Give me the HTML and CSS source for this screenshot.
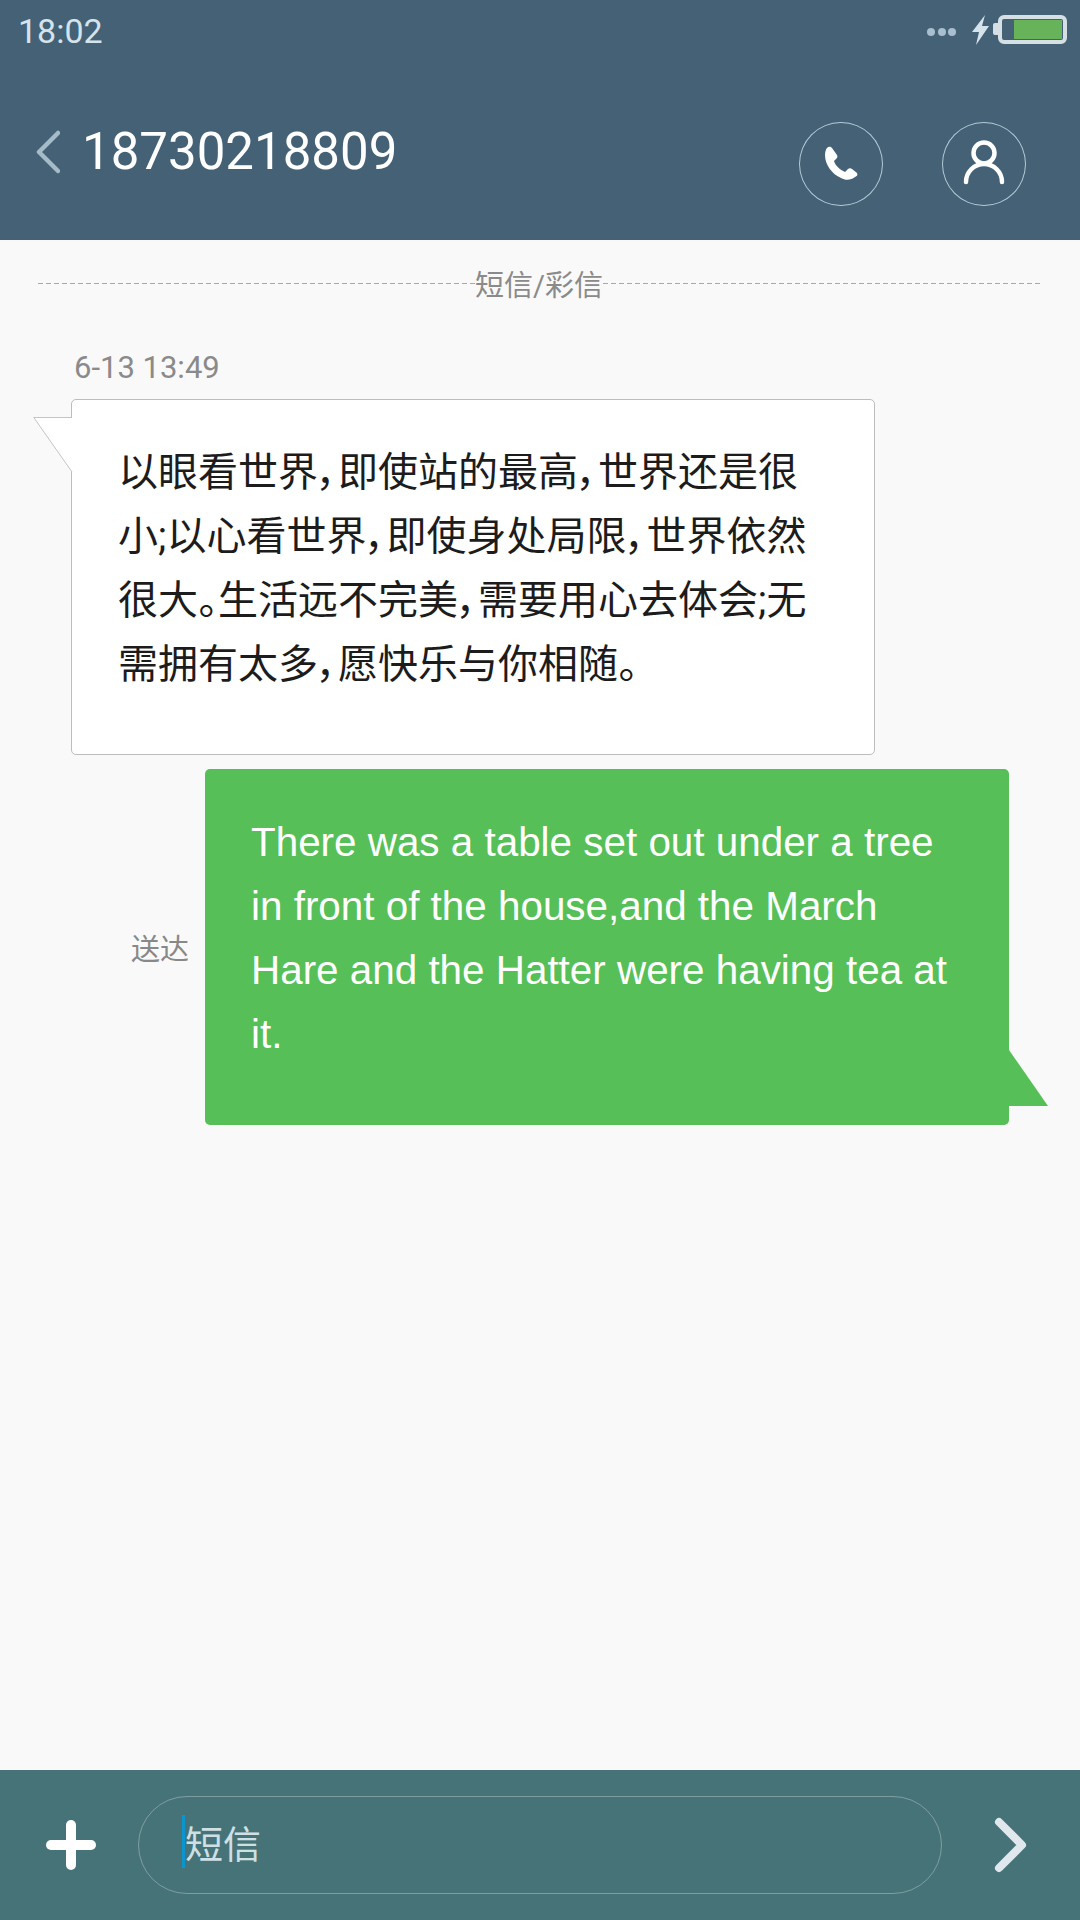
FILE: index.html
```html
<!DOCTYPE html>
<html lang="zh-CN">
<head>
    <meta charset="UTF-8">
    <title>18730218809</title>
    <link rel="stylesheet" href="styles.css">
</head>
<body>
    <header class="top">
        <div class="status">
            <span class="clock">18:02</span>
            <div class="status-icons">
                <div class="dots"><i></i><i></i><i></i></div>
                <svg class="bolt" width="18" height="30" viewBox="0 0 18 30"><path d="M13 0 L0 17 L7 17 L4 30 L17 11 L10 11 Z" fill="#d5e3ec"/></svg>
                <div class="battery-nub"></div>
                <div class="battery"><div class="battery-fill"></div></div>
            </div>
        </div>
        <div class="title-row">
            <div class="title-left">
                <svg class="back" width="24" height="44" viewBox="0 0 24 44"><path d="M22 3 L3 22 L22 41" fill="none" stroke="#a5bcc8" stroke-width="4.5" stroke-linecap="round" stroke-linejoin="round"/></svg>
                <h1 class="number">18730218809</h1>
            </div>
            <div class="actions">
                <div class="round-btn">
                    <svg width="84" height="84" viewBox="0 0 84 84"><path d="M28 26 C30 24 32 25 33 26 L38 33 C39 35 38 36 37 37 L35 39 C36 43 41 48 46 50 L49 47 C50 46 52 46 53 47 L58 51 C59 53 58 54 56 55 C52 58 47 59 42 56 C33 52 26 43 26 33 C26 30 27 27 28 26 Z" fill="#fff"/></svg>
                </div>
                <div class="round-btn">
                    <svg width="84" height="84" viewBox="0 0 84 84"><circle cx="42" cy="31" r="10.5" fill="none" stroke="#fff" stroke-width="4.5"/><path d="M24 60 A18 18 0 0 1 60 60" fill="none" stroke="#fff" stroke-width="4.5" stroke-linecap="round"/></svg>
                </div>
            </div>
        </div>
    </header>

    <main class="thread">
        <div class="divider"><span class="rule"></span><span>短信/彩信</span><span class="rule"></span></div>
        <div class="stamp">6-13 13:49</div>
        <div class="bubble bubble-in">
            <svg class="tail-in" width="40" height="56" viewBox="0 0 40 56"><path d="M39 1 H1 L39 55 Z" fill="#fff"/><path d="M39 .5 H.8 L39 55" fill="none" stroke="#c4c4c4" stroke-width="1"/></svg>
            以眼看世界&#65292;即使站的最高&#65292;世界还是很小;以心看世界&#65292;即使身处局限&#65292;世界依然很大。生活远不完美&#65292;需要用心去体会;无需拥有太多&#65292;愿快乐与你相随。
        </div>
        <div class="out-row">
            <span class="sent">送达</span>
            <div class="bubble bubble-out">
                <svg class="tail-out" width="40" height="56" viewBox="0 0 40 56"><path d="M0 0 L39 56 H0 Z" fill="#56bf57"/></svg>
                There was a table set out under a tree in front of the house,and the March Hare and the Hatter were having tea at it.
            </div>
        </div>
    </main>

    <footer class="composer">
        <div class="plus"></div>
        <div class="field"><span class="caret"></span><span>短信</span></div>
        <svg class="send" width="36" height="60" viewBox="0 0 36 60"><path d="M5 7 L28 30 L5 53" fill="none" stroke="#e0e8ee" stroke-width="8" stroke-linecap="round" stroke-linejoin="round"/></svg>
    </footer>
</body>
</html>
```

FILE: styles.css
```css
* {
    box-sizing: border-box;
}

body {
    margin: 0;
    width: 1080px;
    height: 1920px;
    display: flex;
    flex-direction: column;
    background-color: #f9f9f9;
    font-family: Roboto, "Noto Sans CJK SC", sans-serif;
    overflow: hidden;
}

.top {
    height: 240px;
    background-color: #446176;
    color: #fff;
    flex-shrink: 0;
}

.status {
    display: flex;
    justify-content: space-between;
    padding: 12px 13px 0 18px;
    height: 60px;
}

.clock {
    font-size: 34px;
    line-height: 38px;
    color: #d5e3ec;
}

.status-icons {
    display: flex;
    align-items: flex-start;
    padding-top: 3px;
}

.dots {
    display: flex;
    gap: 2.5px;
    margin-top: 13px;
    margin-right: 16px;
}

.dots i {
    width: 8px;
    height: 8px;
    border-radius: 50%;
    background-color: #a9bfcf;
}

.bolt {
    margin-right: 3px;
}

.battery-nub {
    width: 5px;
    height: 12px;
    margin-top: 8px;
    background-color: #d5dfe4;
    border-radius: 2px 0 0 2px;
}

.battery {
    width: 69px;
    height: 29px;
    padding: 1px 1px 1px 12px;
    border: 4px solid #d5dfe4;
    border-radius: 6px;
}

.battery-fill {
    height: 100%;
    background-color: #67b35a;
}

.title-row {
    display: flex;
    justify-content: space-between;
    padding: 62px 54px 0 36px;
}

.title-left {
    display: flex;
    align-items: center;
    gap: 22px;
    height: 60px;
}

.number {
    margin: 0;
    font-size: 51px;
    font-weight: 400;
    line-height: 60px;
}

.actions {
    display: flex;
    gap: 59px;
}

.round-btn {
    width: 84px;
    height: 84px;
    border-radius: 50%;
    box-shadow: inset 0 0 0 1px #b5cbd8;
}

.round-btn svg {
    display: block;
}

.thread {
    flex: 1;
    display: flex;
    flex-direction: column;
}

.divider {
    display: flex;
    align-items: center;
    height: 40px;
    margin: 23px 40px 0 38px;
    font-size: 29px;
    color: #8a8a8a;
}

.rule {
    flex: 1;
    height: 1px;
    background-image: repeating-linear-gradient(to right, #a8a8a8 0 5px, transparent 5px 8px);
}

.stamp {
    margin: 47px 0 0 74px;
    height: 36px;
    font-size: 31px;
    line-height: 36px;
    color: #8a8a8a;
}

.bubble {
    position: relative;
    width: 804px;
    border-radius: 5px;
    line-height: 64px;
}

.bubble-in {
    margin: 13px 0 0 71px;
    padding: 41px 50px 57px 46px;
    background-color: #fff;
    border: 1px solid #bdbdbd;
    font-size: 40px;
    font-feature-settings: "palt";
    color: #1c1c1c;
}

.tail-in {
    position: absolute;
    left: -39px;
    top: 17px;
}

.out-row {
    display: flex;
    justify-content: flex-end;
    align-items: center;
    gap: 16px;
    margin-top: 14px;
    padding-right: 71px;
}

.sent {
    font-size: 29px;
    color: #888;
}

.bubble-out {
    height: 356px;
    padding: 41px 48px 0 46px;
    background-color: #56bf57;
    font-family: "Liberation Sans", sans-serif;
    font-size: 40.4px;
    color: #fff;
}

.tail-out {
    position: absolute;
    left: 804px;
    top: 281px;
}

.composer {
    height: 150px;
    flex-shrink: 0;
    display: flex;
    align-items: center;
    padding: 0 50px 0 46px;
    background-color: #467378;
}

.plus {
    position: relative;
    width: 50px;
    height: 50px;
    margin-right: 42px;
}

.plus::before,
.plus::after {
    content: "";
    position: absolute;
    background-color: #fff;
    border-radius: 5px;
}

.plus::before {
    left: 0;
    right: 0;
    top: 20px;
    height: 10px;
}

.plus::after {
    top: 0;
    bottom: 0;
    left: 20px;
    width: 10px;
}

.field {
    width: 804px;
    height: 98px;
    display: flex;
    align-items: center;
    padding: 0 0 7px 43px;
    border: 1px solid rgba(255, 255, 255, 0.3);
    border-radius: 49px;
    font-size: 38px;
    color: #cfe0e4;
}

.caret {
    width: 3px;
    height: 53px;
    background-color: #0a94d0;
}

.send {
    margin-left: auto;
}
```
